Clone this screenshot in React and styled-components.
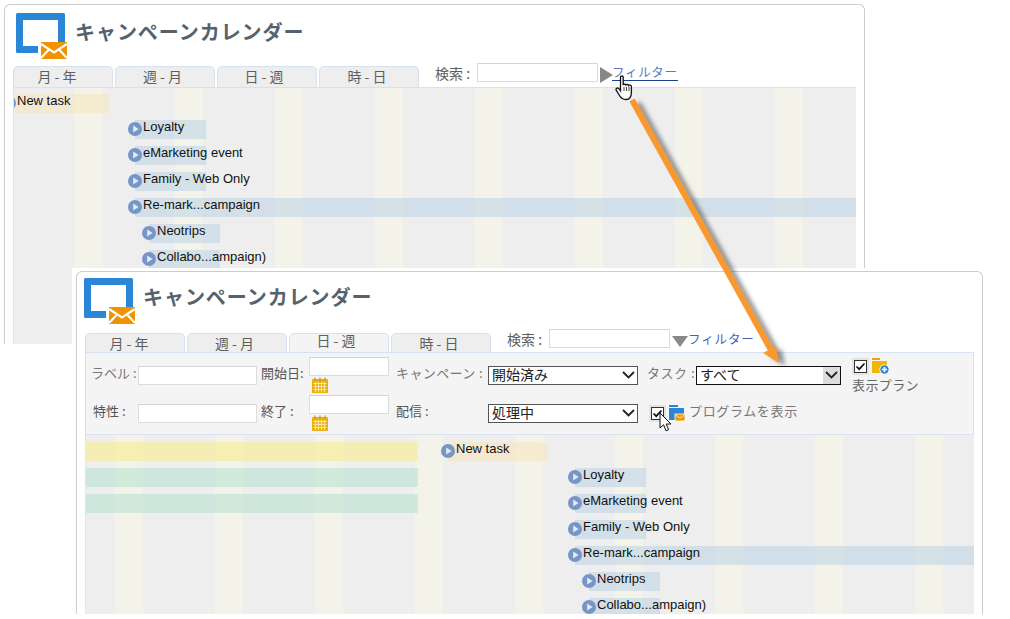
import React from "react";
import styled, { createGlobalStyle } from "styled-components";

const Global = createGlobalStyle`
  html, body { margin: 0; padding: 0; background: #fff; }
  body { font-family: "Liberation Sans", "Noto Sans CJK JP", sans-serif; }
`;

const Desktop = styled.div`
  position: relative;
  width: 1010px;
  height: 619px;
  overflow: hidden;
  background: #fff;
`;

const Window = styled.section`
  position: absolute;
  left: ${(p) => p.$left}px;
  top: ${(p) => p.$top}px;
  width: ${(p) => p.$width}px;
  height: ${(p) => p.$height}px;
  box-sizing: border-box;
  padding: ${(p) => p.$padTop}px 8px 0 8px;
  display: flex;
  flex-direction: column;
  overflow: hidden;
  background: #fff;
  border: 1px solid #cdcdcd;
  border-bottom: 0;
  border-radius: 6px 6px 0 0;
`;

const Halo = styled.div`
  position: absolute;
  left: 72px;
  top: 268px;
  width: 915px;
  height: 351px;
  background: #fff;
`;

const Header = styled.header`
  display: flex;
  align-items: flex-start;
  height: ${(p) => p.$height}px;
  flex: none;
  margin-left: ${(p) => p.$shift}px;
`;

const LogoSvg = styled.svg`
  flex: none;
`;

const Title = styled.h1`
  margin: 7px 0 0 7px;
  font-size: 20px;
  line-height: 24px;
  font-weight: 700;
  letter-spacing: 0.95px;
  color: #55626e;
  font-family: "Noto Sans CJK JP", sans-serif;
`;

const TabRow = styled.div`
  display: flex;
  align-items: flex-start;
  flex: none;
  height: ${(p) => p.$height}px;
`;

const Tab = styled.div`
  box-sizing: border-box;
  width: 100px;
  height: 100%;
  margin-right: 2px;
  padding-right: ${(p) => p.$shift}px;
  border: 1px solid #d6e2f2;
  border-bottom: 0;
  border-radius: 5px 5px 0 0;
  background: ${(p) => (p.$active ? "#f4f4f4" : "#eeeeee")};
  color: #5e5e5e;
  font-size: 14px;
  line-height: ${(p) => p.$line}px;
  text-align: center;
  white-space: nowrap;
  font-family: "Noto Sans CJK JP", sans-serif;
`;

const SearchArea = styled.div`
  display: flex;
  align-items: center;
  margin: -4px 0 0 14px;
  font-size: 14px;
  line-height: 18px;
  color: #5e5e5e;
  font-family: "Noto Sans CJK JP", sans-serif;
`;

const SearchLabel = styled.span`
  width: 42px;
  white-space: nowrap;
`;

const TextBox = styled.div`
  box-sizing: border-box;
  width: ${(p) => p.$width}px;
  height: 19px;
  background: #fff;
  border: 1px solid #dcdcdc;
  border-top-color: #d4d4d4;
  flex: none;
`;

const TriSvg = styled.svg`
  flex: none;
  margin: ${(p) => (p.$down ? "5px 1px 0 2px" : "5px 0 0 2px")};
`;

const FilterLink = styled.span`
  color: ${(p) => p.$color};
  font-size: 12.5px;
  letter-spacing: ${(p) => p.$spacing}px;
  line-height: 16px;
  white-space: nowrap;
  margin-left: -1px;
  border-bottom: ${(p) => (p.$underline ? "1px solid #1d3f8f" : "0")};
`;

const Filters = styled.div`
  flex: none;
  box-sizing: border-box;
  height: 83px;
  padding-top: 3px;
  background: #f4f4f4;
  border: 1px solid #d6e2f2;
  border-bottom-color: #d9e2ee;
  display: grid;
  grid-template-columns: 52px 123px 48px 87px 92px 159px 49px 156px 1fr;
  grid-template-rows: 38px 38px;
  align-items: center;
  font-size: 13px;
  color: #666;
  font-family: "Noto Sans CJK JP", sans-serif;
`;

const FieldLabel = styled.span`
  padding-left: ${(p) => p.$pad || 0}px;
  padding-bottom: ${(p) => (p.$flat ? 0 : 5)}px;
  white-space: nowrap;
  letter-spacing: ${(p) => p.$spacing || 0}px;
  color: ${(p) => p.$color || "#666"};
`;

const DateField = styled.div`
  display: flex;
  flex-direction: column;
  align-items: flex-start;
  gap: 1px;
`;

const CalendarSlot = styled.div`
  padding-left: 3px;
  height: 16px;
`;

const Select = styled.div`
  box-sizing: border-box;
  width: ${(p) => p.$width}px;
  height: 19px;
  display: flex;
  align-items: center;
  justify-content: space-between;
  background: #fff;
  border: 1px solid #444;
  border-color: ${(p) => (p.$focus ? "#111" : "#555")};
  padding-left: 3px;
  color: #222;
  font-size: 14px;
`;

const SelectText = styled.span`
  margin-top: -2px;
`;

const SelectArrow = styled.span`
  align-self: stretch;
  width: 17px;
  display: flex;
  align-items: center;
  justify-content: center;
  background: ${(p) => (p.$focus ? "#dcdcdc" : "transparent")};
`;

const CheckFrame = styled.div`
  box-sizing: border-box;
  width: 17px;
  height: 17px;
  padding: 2px;
  background: #e3e3e3;
  flex: none;
`;

const CheckInner = styled.div`
  box-sizing: border-box;
  width: 13px;
  height: 13px;
  background: #fff;
  border: 1px solid #333;
  display: flex;
  align-items: center;
  justify-content: center;
`;

const PlanBlock = styled.div`
  grid-column: 9 / 10;
  grid-row: 1 / 2;
  display: flex;
  flex-direction: column;
  align-self: start;
  margin-top: 2px;
`;

const InlineCheck = styled.div`
  display: flex;
  align-items: center;
  gap: 3px;
`;

const ProgramBlock = styled.div`
  grid-column: 7 / 10;
  padding-left: 2px;
  display: flex;
  align-items: center;
  gap: 3px;
`;

const ProgramFolderSvg = styled.svg`
  flex: none;
  margin-right: 1px;
`;

const Board = styled.div`
  flex: 1;
  min-height: 0;
  overflow: hidden;
  box-sizing: border-box;
  padding-top: ${(p) => p.$padTop}px;
  display: flex;
  flex-direction: column;
  gap: 7px;
  background-color: #eeeeee;
  background-image: repeating-linear-gradient(
    to right,
    transparent 0,
    transparent ${(p) => p.$offset}px,
    #f3f3ea ${(p) => p.$offset}px,
    #f3f3ea ${(p) => p.$offset + 28}px,
    transparent ${(p) => p.$offset + 28}px,
    transparent 100px
  );
  border-left: 1px solid #dbe6f4;
  border-top: ${(p) => (p.$topLine ? "0" : "1px solid #d6e2f2")};
`;

const Row = styled.div`
  height: 19px;
  flex: none;
  display: flex;
  background-image: ${(p) =>
    p.$band
      ? `linear-gradient(to right, ${p.$band} 332px, transparent 332px)`
      : "none"};
`;

const Task = styled.div`
  display: flex;
  align-items: flex-start;
  box-sizing: border-box;
  margin-left: ${(p) => p.$left}px;
  width: ${(p) => p.$width}px;
  flex: none;
  height: 19px;
  white-space: nowrap;
  font-size: 13px;
  color: #111;
  background-image: linear-gradient(
    to right,
    transparent 7px,
    ${(p) => p.$color} 7px
  );
`;

const PlaySvg = styled.svg`
  flex: none;
  margin-top: 2px;
`;

const TaskLabel = styled.span`
  margin-left: 1px;
  line-height: 14px;
`;

const Overlay = styled.svg`
  position: absolute;
  left: 0;
  top: 0;
  pointer-events: none;
`;

const Cursor = styled.svg`
  position: absolute;
  left: ${(p) => p.$left}px;
  top: ${(p) => p.$top}px;
`;

const BLUE = "rgba(187, 211, 229, 0.55)";
const TAN = "rgba(247, 229, 189, 0.55)";
const YELLOW = "rgba(250, 235, 125, 0.5)";
const GREEN = "rgba(180, 225, 205, 0.55)";

const Logo = () => (
  <LogoSvg width="52" height="47" viewBox="0 0 52 47">
    <path
      d="M1.5 0H47.5A1.5 1.5 0 0 1 49 1.5V29H42V7H7V33H22V40H1.5A1.5 1.5 0 0 1 0 38.5V1.5A1.5 1.5 0 0 1 1.5 0Z"
      fill="#2c86d6"
    />
    <rect x="25" y="29" width="26" height="17" fill="#f09300" />
    <path d="M25 31L38 39.5L51 31" fill="none" stroke="#fff" strokeWidth="2.2" />
    <path d="M25 45L33 36.5M51 45L43 36.5" fill="none" stroke="#fff" strokeWidth="2" />
  </LogoSvg>
);

const PlayIcon = () => (
  <PlaySvg width="14" height="14" viewBox="0 0 14 14">
    <circle cx="7" cy="7" r="7" fill="#7596c6" />
    <path d="M5.2 3.4L10.6 7L5.2 10.6Z" fill="#e4ebf5" />
  </PlaySvg>
);

const CalendarIcon = () => (
  <svg width="16" height="16" viewBox="0 0 16 16">
    <rect x="0" y="2" width="16" height="14" rx="1" fill="#e9b10f" />
    <path d="M3 0.5V3.5M8 0.5V3.5M13 0.5V3.5" stroke="#c99500" strokeWidth="1.2" />
    <path
      d="M1.5 6.5H14.5M1.5 9.5H14.5M1.5 12.5H14.5M3.5 5V15M6.5 5V15M9.5 5V15M12.5 5V15"
      stroke="#fbe7a6"
      strokeWidth="1"
    />
  </svg>
);

const PlanFolder = () => (
  <svg width="18" height="17" viewBox="0 0 18 17">
    <path d="M0 0H8V2H0Z" fill="#f39c1f" />
    <path d="M0 3H15V15H0Z" fill="#f2b705" />
    <circle cx="12.5" cy="11.5" r="5" fill="#fff" />
    <circle cx="12.5" cy="11.5" r="4.2" fill="#2c86d6" />
    <path d="M10 11.5H15M12.5 9V14" stroke="#fff" strokeWidth="1.6" />
  </svg>
);

const ProgramFolder = () => (
  <ProgramFolderSvg width="16" height="16" viewBox="0 0 16 16">
    <path d="M0 0H9V2H0Z" fill="#2c86d6" />
    <path d="M0 3H15V15H0Z" fill="#2c86d6" />
    <rect x="6" y="9" width="10" height="7" fill="#f09300" stroke="#fff" strokeWidth="0.8" />
    <path d="M6.5 10L11 13L15.5 10" fill="none" stroke="#fff" strokeWidth="0.8" />
  </ProgramFolderSvg>
);

const Chevron = () => (
  <svg width="13" height="8" viewBox="0 0 13 8">
    <path d="M1 1L6.5 6.5L12 1" fill="none" stroke="#222" strokeWidth="1.8" />
  </svg>
);

const Check = () => (
  <svg width="11" height="9" viewBox="0 0 11 9">
    <path d="M1.5 4.5L4.2 7.2L9.5 1.5" fill="none" stroke="#111" strokeWidth="1.7" />
  </svg>
);

const Tri = ({ down }) => (
  <TriSvg
    $down={down}
    width={down ? 16 : 13}
    height={down ? 11 : 16}
    viewBox={down ? "0 0 16 11" : "0 0 13 16"}
  >
    <path d={down ? "M0 0H16L8 11Z" : "M0 0L13 8L0 16Z"} fill="#888" />
  </TriSvg>
);

const tabs = [
  { text: "月 - 年", shift: 12 },
  { text: "週 - 月", shift: 5 },
  { text: "日 - 週", shift: 6 },
  { text: "時 - 日", shift: 4 },
];

const Tasks = ({ base, banded }) => {
  const items = [
    { name: "Loyalty", left: base, width: 78 },
    { name: "eMarketing event", left: base, width: 78 },
    { name: "Family - Web Only", left: base, width: 78 },
    { name: "Re-mark...campaign", left: base, width: 900 },
    { name: "Neotrips", left: base + 14, width: 78 },
    { name: "Collabo...ampaign)", left: base + 14, width: 78 },
  ];
  return items.map((t, i) => (
    <Row key={t.name} $band={banded && i < 2 ? GREEN : null}>
      <Task $left={t.left} $width={t.width} $color={BLUE}>
        <PlayIcon />
        <TaskLabel>{t.name}</TaskLabel>
      </Task>
    </Row>
  ));
};

export default function App() {
  return (
    <Desktop>
      <Global />

      <Window $left={4} $top={4} $width={861} $height={340} $padTop={8}>
        <Header $height={53} $shift={3}>
          <Logo />
          <Title>キャンペーンカレンダー</Title>
        </Header>
        <TabRow $height={21}>
          {tabs.map((t) => (
            <Tab key={t.text} $line={18} $shift={t.shift}>{t.text}</Tab>
          ))}
          <SearchArea>
            <SearchLabel>検索 :</SearchLabel>
            <TextBox $width={121} />
            <Tri />
            <FilterLink $color="#5b78bd" $spacing={0.7} $underline>フィルター</FilterLink>
          </SearchArea>
        </TabRow>
        <Board $offset={61} $padTop={6}>
          <Row>
            <Task $left={-12} $width={107} $color={TAN}>
              <PlayIcon />
              <TaskLabel>New task</TaskLabel>
            </Task>
          </Row>
          <Tasks base={114} />
        </Board>
      </Window>

      <Halo />

      <Window $left={76} $top={271} $width={907} $height={343} $padTop={6}>
        <Header $height={55} $shift={-1}>
          <Logo />
          <Title>キャンペーンカレンダー</Title>
        </Header>
        <TabRow $height={19}>
          {tabs.map((t, i) => (
            <Tab key={t.text} $active={i === 2} $line={i === 2 ? 13 : 18} $shift={t.shift}>
              {t.text}
            </Tab>
          ))}
          <SearchArea>
            <SearchLabel>検索 :</SearchLabel>
            <TextBox $width={121} />
            <Tri down />
            <FilterLink $color="#3f64b5" $spacing={0.9}>フィルター</FilterLink>
          </SearchArea>
        </TabRow>
        <Filters>
          <FieldLabel $pad={5} $color="#777">ラベル :</FieldLabel>
          <TextBox $width={119} />
          <FieldLabel $color="#555">開始日:</FieldLabel>
          <DateField>
            <TextBox $width={80} />
            <CalendarSlot><CalendarIcon /></CalendarSlot>
          </DateField>
          <FieldLabel $color="#777" $spacing={0.4}>キャンペーン :</FieldLabel>
          <Select $width={150}>
            <SelectText>開始済み</SelectText>
            <SelectArrow><Chevron /></SelectArrow>
          </Select>
          <FieldLabel $color="#777" $spacing={0.5}>タスク :</FieldLabel>
          <Select $width={145} $focus>
            <SelectText>すべて</SelectText>
            <SelectArrow $focus><Chevron /></SelectArrow>
          </Select>
          <PlanBlock>
            <InlineCheck>
              <CheckFrame><CheckInner><Check /></CheckInner></CheckFrame>
              <PlanFolder />
            </InlineCheck>
            <FieldLabel $flat $spacing={0.4}>表示プラン</FieldLabel>
          </PlanBlock>

          <FieldLabel $pad={7} $color="#555">特性 :</FieldLabel>
          <TextBox $width={119} />
          <FieldLabel $color="#555">終了 :</FieldLabel>
          <DateField>
            <TextBox $width={80} />
            <CalendarSlot><CalendarIcon /></CalendarSlot>
          </DateField>
          <FieldLabel $color="#555">配信 :</FieldLabel>
          <Select $width={150}>
            <SelectText>処理中</SelectText>
            <SelectArrow><Chevron /></SelectArrow>
          </Select>
          <ProgramBlock>
            <CheckFrame><CheckInner><Check /></CheckInner></CheckFrame>
            <ProgramFolder />
            <FieldLabel $color="#777" $spacing={0.65}>プログラムを表示</FieldLabel>
          </ProgramBlock>
        </Filters>
        <Board $offset={29} $padTop={7} $topLine>
          <Row $band={YELLOW}>
            <Task $left={355} $width={107} $color={TAN}>
              <PlayIcon />
              <TaskLabel>New task</TaskLabel>
            </Task>
          </Row>
          <Tasks base={482} banded />
        </Board>
      </Window>

      <Overlay width="1010" height="619" viewBox="0 0 1010 619">
        <defs>
          <filter id="soft" x="-20%" y="-20%" width="140%" height="140%">
            <feGaussianBlur stdDeviation="2" />
          </filter>
        </defs>
        <g transform="translate(6 3)" filter="url(#soft)" opacity="0.55">
          <path d="M632 100L771 350" stroke="#444" strokeWidth="6" />
          <path d="M763 353L776 346L779 363Z" fill="#444" />
        </g>
        <path d="M632 100L771 350" stroke="#f9982f" strokeWidth="6" />
        <path d="M763 353L776 346L779 363Z" fill="#f9982f" />
      </Overlay>

      <Cursor $left={615} $top={75} width="19" height="26" viewBox="0 0 19 26">
        <path
          d="M5.5 2.2C5.5 .6 8.2 .6 8.2 2.2V10C8.8 8.8 10.6 8.8 11 10C11.6 9 13.3 9.2 13.6 10.5C14.3 9.7 16.4 10 16.4 11.6V17C16.4 21 14.8 24.5 11 24.5C7.5 24.5 6 23.2 4.5 20.5L1.2 15.2C.4 13.6 2.6 12.2 3.8 13.6L5.5 15.8Z"
          fill="#fff"
          stroke="#111"
          strokeWidth="1.3"
        />
        <path d="M9 12V16M11.5 12V16M14 12V16" stroke="#111" strokeWidth="0.8" />
      </Cursor>

      <Cursor $left={659} $top={412} width="13" height="21" viewBox="0 0 13 21">
        <path
          d="M1 1V16L4.6 12.8L7 18.8L9.6 17.7L7.2 12H12Z"
          fill="#fff"
          stroke="#111"
          strokeWidth="1"
        />
      </Cursor>
    </Desktop>
  );
}
